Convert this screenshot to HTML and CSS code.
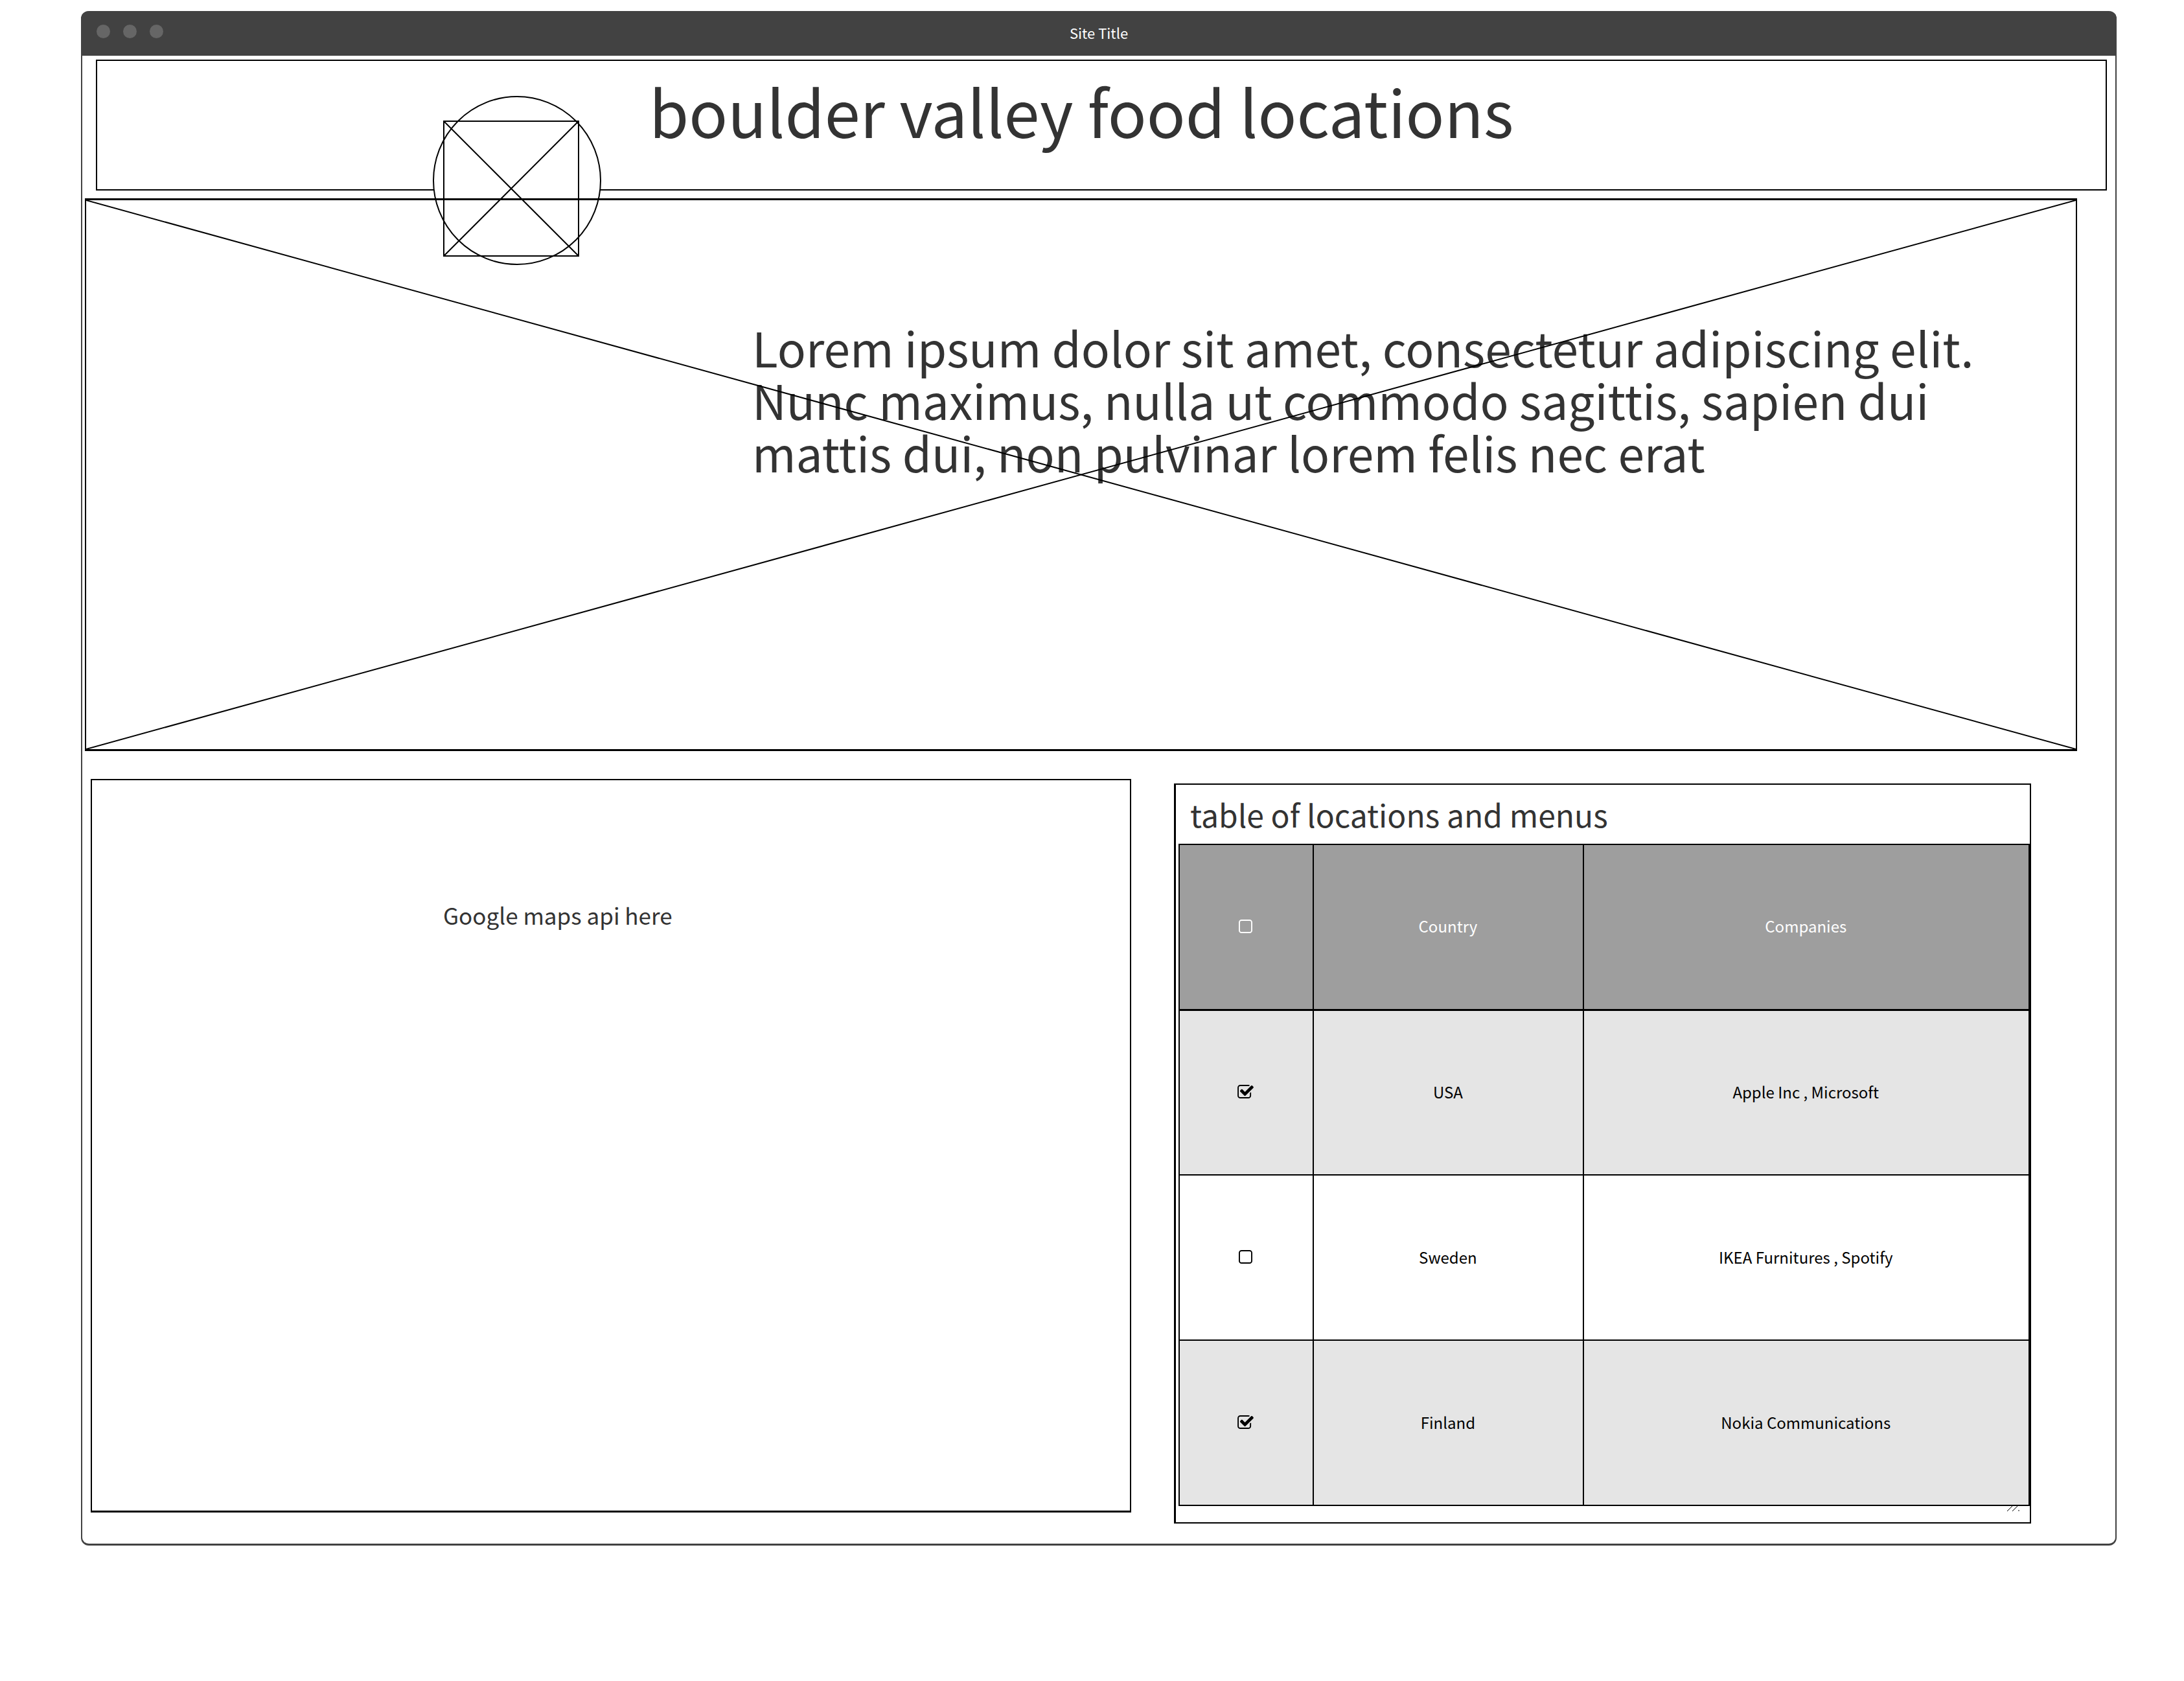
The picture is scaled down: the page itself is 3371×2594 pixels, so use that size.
FILE: index.html
```html
<!DOCTYPE html>
<html lang="en">
<head>
<meta charset="utf-8">
<title>Site Title</title>
<link rel="stylesheet" href="styles.css">
</head>
<body>
<div class="window">
  <div class="titlebar">
    <div class="dots"><span class="dot"></span><span class="dot"></span><span class="dot"></span></div>
    <div class="site-title">Site Title</div>
  </div>
  <header class="banner">
    <h1 class="banner-title">boulder valley food locations</h1>
    <svg class="logo" viewBox="0 0 260 261" aria-hidden="true">
      <ellipse cx="130" cy="130.5" rx="129" ry="129.5" fill="#fff"/>
      <rect x="17" y="39" width="208" height="208"/>
      <path d="M17 39L225 247M225 39L17 247"/>
    </svg>
  </header>
  <section class="hero">
    <p class="hero-text">Lorem ipsum dolor sit amet, consectetur adipiscing elit.<br>Nunc maximus, nulla ut commodo sagittis, sapien dui<br>mattis dui, non pulvinar lorem felis nec erat</p>
    <svg class="cross" aria-hidden="true">
      <line x1="0" y1="0" x2="100%" y2="100%"/>
      <line x1="0" y1="100%" x2="100%" y2="0"/>
    </svg>
  </section>
  <main class="columns">
    <section class="map"><p class="map-text">Google maps api here</p></section>
    <section class="panel">
      <h2 class="panel-title">table of locations and menus</h2>
      <table class="places">
        <colgroup><col class="col-check"><col class="col-country"><col></colgroup>
        <thead>
          <tr>
            <th><label class="tick"><input type="checkbox" aria-label="Select all"><svg class="box" viewBox="0 128 1408 1408"><use href="#empty"/></svg></label></th>
            <th>Country</th>
            <th>Companies</th>
          </tr>
        </thead>
        <tbody>
          <tr>
            <td><label class="tick"><input type="checkbox" checked aria-label="Select USA"><svg class="box box-checked" viewBox="0 128 1664 1408"><use href="#checked"/></svg></label></td>
            <td>USA</td>
            <td>Apple Inc , Microsoft</td>
          </tr>
          <tr>
            <td><label class="tick"><input type="checkbox" aria-label="Select Sweden"><svg class="box" viewBox="0 128 1408 1408"><use href="#empty"/></svg></label></td>
            <td>Sweden</td>
            <td>IKEA Furnitures , Spotify</td>
          </tr>
          <tr>
            <td><label class="tick"><input type="checkbox" checked aria-label="Select Finland"><svg class="box box-checked" viewBox="0 128 1664 1408"><use href="#checked"/></svg></label></td>
            <td>Finland</td>
            <td>Nokia Communications</td>
          </tr>
        </tbody>
      </table>
      <div class="panel-foot">
        <svg class="grip" viewBox="0 0 19 8" aria-hidden="true"><path d="M0 8L8 0M8 8L16 0M17 7h2"/></svg>
      </div>
    </section>
  </main>
</div>
<svg class="symbols" aria-hidden="true">
  <defs>
    <path id="empty" d="M1120 256h-832q-66 0-113 47t-47 113v832q0 66 47 113t113 47h832q66 0 113-47t47-113v-832q0-66-47-113t-113-47zm288 160v832q0 119-84.500 203.500t-203.500 84.500h-832q-119 0-203.500-84.500t-84.500-203.500v-832q0-119 84.500-203.500t203.500-84.500h832q119 0 203.500 84.500t84.500 203.500z"/>
    <path id="checked" d="M1408 930v318q0 119-84.500 203.500t-203.500 84.500h-832q-119 0-203.500-84.500t-84.500-203.500v-832q0-119 84.500-203.500t203.500-84.500h832q63 0 117 25 15 7 18 23 3 17-9 29l-49 49q-14 14-32 8-23-6-45-6h-832q-66 0-113 47t-47 113v832q0 66 47 113t113 47h832q66 0 113-47t47-113v-254q0-13 9-22l64-64q15-15 35-7t20 29zm231-489l-814 814q-24 24-57 24t-57-24l-430-430q-24-24-24-57t24-57l110-110q24-24 57-24t57 24l263 263 647-647q24-24 57-24t57 24l110 110q24 24 24 57t-24 57z"/>
  </defs>
</svg>
</body>
</html>
```
FILE: styles.css
```css
* {
  box-sizing: border-box;
}

body {
  margin: 0;
  padding: 17px 104px 17px 125px;
  background: #fff;
  color: #333;
  font-family: "Noto Sans CJK SC", "Noto Sans", sans-serif;
}

h1,
h2,
p {
  margin: 0;
  font-weight: 400;
}

.window {
  border: 2px solid #424242;
  border-top: 0;
  border-bottom-width: 3px;
  border-radius: 12px;
  padding-bottom: 31px;
}

/* Title bar */
.titlebar {
  display: grid;
  grid-template-columns: 1fr auto 1fr;
  align-items: center;
  height: 69px;
  margin: 0 -2px;
  padding: 0 24px;
  border-radius: 12px 12px 0 0;
  background: #424242;
  color: #fff;
  font-size: 22px;
  line-height: 32px;
}

.dots {
  display: flex;
  gap: 20px;
  padding-bottom: 6px;
}

.dot {
  width: 21px;
  height: 21px;
  border-radius: 50%;
  background: #666;
}

.site-title {
  padding-bottom: 4px;
}

/* Banner */
.banner {
  position: relative;
  margin: 6px 13px 0 21px;
  padding: 16px 0 62px 852px;
  border: 2px solid #000;
}

.banner-title {
  font-size: 99px;
  line-height: 120px;
}

.logo {
  position: absolute;
  left: 518px;
  top: 54px;
  width: 260px;
  height: 261px;
  fill: none;
  stroke: #000;
  stroke-width: 2px;
}

/* Hero */
.hero {
  position: relative;
  min-height: 853px;
  margin: 12px 59px 0 4px;
  padding: 186px 0 0 1028px;
  border: solid #000;
  border-width: 3px 2px;
}

.hero-text {
  font-size: 73px;
  line-height: 81px;
}

.cross {
  position: absolute;
  inset: 0;
  width: 100%;
  height: 100%;
  stroke: #000;
  stroke-width: 2px;
}

/* Map and table */
.columns {
  display: grid;
  grid-template-columns: 1606fr 1323fr;
  align-items: start;
  gap: 66px;
  margin: 43px 130px 0 13px;
}

.map {
  min-height: 1132px;
  padding: 178px 0 0 542px;
  border: 2px solid #000;
  border-bottom-width: 3px;
}

.map-text {
  font-size: 35px;
  line-height: 60px;
}

.panel {
  margin-top: 7px;
  border: 2px solid #000;
  border-left-width: 3px;
}

.panel-title {
  padding: 15px 0 16px 22px;
  font-size: 48px;
  line-height: 60px;
}

.places {
  width: calc(100% - 4px);
  margin-left: 4px;
  border-collapse: collapse;
  table-layout: fixed;
  color: #000;
  font-size: 24px;
  line-height: 32px;
  text-align: center;
}

.col-check {
  width: 15.8%;
}

.col-country {
  width: 31.8%;
}

.places th,
.places td {
  height: 255px;
  padding: 0 2px 2px 0;
  border: 2px solid #000;
  font-weight: 400;
}

.places th {
  border-bottom-width: 3px;
  background: #9e9e9e;
  color: #fff;
}

.places tbody tr:nth-child(odd) {
  background: #e5e5e5;
}

.tick {
  position: relative;
  display: flex;
  justify-content: center;
}

.tick input {
  position: absolute;
  inset: 0;
  width: 100%;
  height: 100%;
  margin: 0;
  opacity: 0;
}

.box {
  width: 21px;
  height: 21px;
  fill: currentColor;
}

.box-checked {
  width: 25px;
}

.panel-foot {
  display: flex;
  justify-content: flex-end;
  height: 25px;
  padding-right: 16px;
}

.grip {
  width: 19px;
  height: 8px;
  stroke: #000;
  stroke-width: 1px;
}

.symbols {
  display: none;
}
```
